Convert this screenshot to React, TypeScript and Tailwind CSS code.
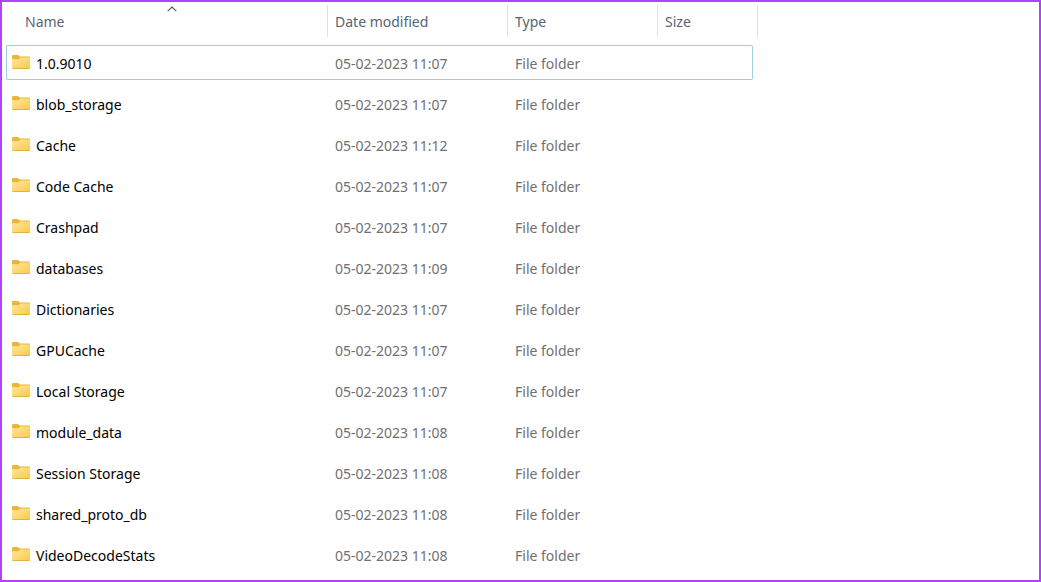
import React from "react";

type Entry = { name: string; modified: string };

const entries: Entry[] = [
  { name: "1.0.9010", modified: "05-02-2023 11:07" },
  { name: "blob_storage", modified: "05-02-2023 11:07" },
  { name: "Cache", modified: "05-02-2023 11:12" },
  { name: "Code Cache", modified: "05-02-2023 11:07" },
  { name: "Crashpad", modified: "05-02-2023 11:07" },
  { name: "databases", modified: "05-02-2023 11:09" },
  { name: "Dictionaries", modified: "05-02-2023 11:07" },
  { name: "GPUCache", modified: "05-02-2023 11:07" },
  { name: "Local Storage", modified: "05-02-2023 11:07" },
  { name: "module_data", modified: "05-02-2023 11:08" },
  { name: "Session Storage", modified: "05-02-2023 11:08" },
  { name: "shared_proto_db", modified: "05-02-2023 11:08" },
  { name: "VideoDecodeStats", modified: "05-02-2023 11:08" },
];

function FolderIcon() {
  return (
    <svg width="18" height="15" viewBox="0 0 18 15" className="shrink-0" aria-hidden="true">
      <defs>
        <linearGradient id="folder-front" x1="0" y1="0" x2="1" y2="1">
          <stop offset="0" stopColor="#ffe7a0" />
          <stop offset="1" stopColor="#fbca45" />
        </linearGradient>
      </defs>
      <path d="M0 1Q0 0 1 0H5.6Q6.2 0 6.7 .6L7.6 1.5H17Q18 1.5 18 2.5V8H0Z" fill="#e9b638" />
      <path d="M0 4.2H6Q6.6 4.2 7.1 3.7L7.8 3Q8.2 2.6 8.8 2.6H18V13Q18 14 17 14H1Q0 14 0 13Z" fill="url(#folder-front)" />
      <path d="M.2 13.2Q.4 14 1 14H17Q17.6 14 17.8 13.2Z" fill="#d9a640" />
    </svg>
  );
}

function Header({ label, sorted = false, last = false }: { label: string; sorted?: boolean; last?: boolean }) {
  return (
    <th
      scope="col"
      colSpan={last ? 2 : 1}
      aria-sort={sorted ? "ascending" : undefined}
      className="p-0 pt-[3px] pb-[5px] text-left font-normal"
    >
      <button
        type="button"
        className={`relative flex h-8 w-full items-center border-r border-[#e2e2e2] pt-0.5 text-left text-[#566573] ${sorted ? "pl-[19px]" : "pl-[7px]"}`}
      >
        {label}
        {sorted && (
          <svg width="10" height="6" viewBox="0 0 10 6" className="absolute top-px left-1/2" aria-hidden="true">
            <path d="M.7 5.2L5 1L9.3 5.2" fill="none" stroke="#555" strokeWidth="1.1" />
          </svg>
        )}
      </button>
    </th>
  );
}

function Row({ entry, selected }: { entry: Entry; selected: boolean }) {
  const cell = `flex h-[35px] items-center border-y ${selected ? "border-[#a0cde0]" : "border-transparent"}`;
  return (
    <tr aria-selected={selected}>
      <td className="px-0 py-[3px]">
        <div className={`${cell} gap-1.5 rounded-l-xs border-l pl-[5px] text-black`}>
          <FolderIcon />
          <span className="pt-0.5">{entry.name}</span>
        </div>
      </td>
      <td className="px-0 py-[3px]">
        <div className={`${cell} pt-0.5 pl-[7px] text-[#707070]`}>{entry.modified}</div>
      </td>
      <td className="px-0 py-[3px]">
        <div className={`${cell} pt-0.5 pl-[7px] text-[#707070]`}>File folder</div>
      </td>
      <td className="px-0 py-[3px]">
        <div className={`${cell} rounded-r-xs border-r`} />
      </td>
      <td className="p-0" />
    </tr>
  );
}

export default function App() {
  return (
    <main className="min-h-screen border-2 border-[#b044f5] bg-white pl-1 font-['Noto_Sans','Open_Sans',sans-serif] text-[14px] leading-5">
      <table className="w-[752px] table-fixed border-collapse">
        <colgroup>
          <col className="w-[322px]" />
          <col className="w-[180px]" />
          <col className="w-[150px]" />
          <col className="w-[95px]" />
          <col className="w-[5px]" />
        </colgroup>
        <thead>
          <tr>
            <Header label="Name" sorted />
            <Header label="Date modified" />
            <Header label="Type" />
            <Header label="Size" last />
          </tr>
        </thead>
        <tbody>
          {entries.map((entry, i) => (
            <Row key={entry.name} entry={entry} selected={i === 0} />
          ))}
        </tbody>
      </table>
    </main>
  );
}
